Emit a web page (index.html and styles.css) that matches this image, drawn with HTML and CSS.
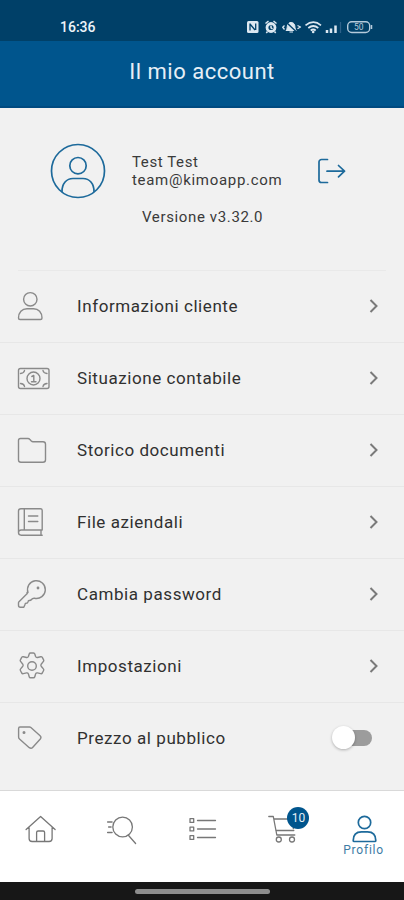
FILE: index.html
```html
<!DOCTYPE html>
<html lang="it">
<head>
<meta charset="utf-8">
<meta name="viewport" content="width=device-width, initial-scale=1">
<title>Il mio account</title>
<link rel="stylesheet" href="styles.css">
</head>
<body>
<div class="screen">
  <div class="status">
    <span class="clock">16:36</span>
    <svg class="status-icons" width="130" height="18" viewBox="0 0 130 18">
      <rect x="1" y="3" width="11.5" height="12" rx="1.5" fill="#dce8f1"/>
      <path d="M4 12.500V6l5 6M9.700 5.500V12" fill="none" stroke="#00426c" stroke-width="1.300"/>
      <circle cx="25" cy="9.500" r="4" fill="none" stroke="#dce8f1" stroke-width="2.800"/>
      <path d="M19.500 5.500l3-2.500M30.500 5.500l-3-2.500M21.500 13.500l-1.200 1.500M28.500 13.500l1.200 1.500M25 7.500v2.300l1.500 1" fill="none" stroke="#dce8f1" stroke-width="1.500"/>
      <path d="M40 12.500c1.500-1.300 1-4 1.600-5.600 1.200-3.300 5.800-3.300 7 0 .6 1.600.1 4.300 1.600 5.600zM43.500 14h3.500" fill="#dce8f1" stroke="#dce8f1"/>
      <path d="M40 4l10 9.500" stroke="#00426c" stroke-width="1.400"/>
      <path d="M36.500 9.500l2-2M36.500 9l2 2.500M51.500 7.500l3 1.500-3 1.800" fill="none" stroke="#dce8f1" stroke-width="1.300"/>
      <path d="M59.500 7.300q8-6.200 15.500 0M62.300 10q5-4 10 0M64.700 12.500q2.500-2 5 0" fill="none" stroke="#dce8f1" stroke-width="1.700"/>
      <circle cx="67.200" cy="14" r="1.300" fill="#dce8f1"/>
      <path d="M81 15v-3M85 15v-4.500M89.500 15V7.500" stroke="#dce8f1" stroke-width="2.500"/>
      <path d="M94.500 15V4" stroke="#2d6189" stroke-width="1.300"/>
      <rect x="101.700" y="3.700" width="22" height="10.800" rx="4" fill="none" stroke="#b6cbdb" stroke-width="1.400"/>
      <path d="M125.500 7v4" stroke="#b6cbdb" stroke-width="1.500"/>
      <text class="battery" x="112.700" y="12.400" text-anchor="middle">50</text>
    </svg>
  </div>
  <header class="header"><h1>Il mio account</h1></header>

  <section class="profile">
    <div class="identity">
      <svg class="avatar" width="56" height="56" viewBox="0 0 56 56">
        <circle cx="28" cy="28" r="26.500"/><circle cx="28" cy="22.700" r="8.200"/>
        <path d="M12 48.500c0-8 4.500-13 11-13h10c6.500 0 11 5 11 13"/>
      </svg>
      <div class="who"><div>Test Test</div><div class="mail">team@kimoapp.com</div></div>
      <svg class="logout" width="30" height="28" viewBox="0 0 30 28">
        <path d="M11.500 2.500H5.500a2.500 2.500 0 0 0-2.500 2.500v18a2.500 2.500 0 0 0 2.500 2.500h6M11 14.200h17.500M22.500 8.500l6 5.700-6 5.700"/>
      </svg>
    </div>
    <div class="version">Versione v3.32.0</div>
  </section>

  <main class="menu">
    <a class="row">
      <svg class="icon" viewBox="0 0 34 35"><circle cx="14.300" cy="10.300" r="6.700"/><path d="M2.500 29c0-5.500 3.500-9.300 8.500-9.300h6.500c5 0 8.500 3.800 8.500 9.300q0 1.500-1.500 1.500h-20.500q-1.500 0-1.500-1.500z"/></svg>
      <span class="label">Informazioni cliente</span>
      <svg class="chevron" viewBox="0 0 12 16"><path d="M2.500 2l6 6-6 6"/></svg>
    </a>
    <a class="row">
      <svg class="icon" viewBox="0 0 34 35"><rect x="2.500" y="7.500" width="30.500" height="20" rx="2"/><circle cx="17.500" cy="17.500" r="6.500"/><path d="M15.800 15.500l2-1v6.300M15.500 20.800h4.500M4.500 12.500q3.500-.2 4-3M31 12.500q-3.500-.2-4-3M4.500 22.500q3.500.2 4 3M31 22.500q-3.500.2-4 3"/></svg>
      <span class="label">Situazione contabile</span>
      <svg class="chevron" viewBox="0 0 12 16"><path d="M2.500 2l6 6-6 6"/></svg>
    </a>
    <a class="row">
      <svg class="icon" viewBox="0 0 34 35"><path d="M4.500 5.500h7.500q1 0 1.700.8l1.600 1.700q.7.700 1.700.7h10q2.500 0 2.500 2.500v15.500q0 2.500-2.500 2.500H5q-2.500 0-2.500-2.500V7.500q0-2 2-2z"/></svg>
      <span class="label">Storico documenti</span>
      <svg class="chevron" viewBox="0 0 12 16"><path d="M2.500 2l6 6-6 6"/></svg>
    </a>
    <a class="row">
      <svg class="icon" viewBox="0 0 34 35"><path d="M26.200 25H5.200q-2.700 0-2.700 2.600t2.700 2.600h21M2.500 27.500V6q0-2.300 2.300-2.300h19.700q1.700 0 1.700 1.700V25M8.300 3.700V25M25 25.300v4.700M12.500 11h9.300M12.500 16.500h9.300"/></svg>
      <span class="label">File aziendali</span>
      <svg class="chevron" viewBox="0 0 12 16"><path d="M2.500 2l6 6-6 6"/></svg>
    </a>
    <a class="row">
      <svg class="icon" viewBox="0 0 34 35"><path d="M12 15.500A8.900 8.900 0 1 1 18.500 21.300q-2-.2-3 1.200-.8 1.200-2.500 1-.8 0-1 1.500-.2 1.300-2 1.300-.8 0-1.200 1.700l-1 2.200h-3.500q-1.800 0-1.800-2v-2.200q0-.7.500-1.200l7.500-7.500q1.300-1.200.5-1.800"/><circle cx="22" cy="11" r=".7"/></svg>
      <span class="label">Cambia password</span>
      <svg class="chevron" viewBox="0 0 12 16"><path d="M2.500 2l6 6-6 6"/></svg>
    </a>
    <a class="row">
      <svg class="icon" viewBox="0 0 34 35"><circle cx="16" cy="17" r="4.300"/><path d="M14.500 4h3q1 0 1.300 1l.8 2.500q.5 1.200 1.800 1l3.300-.8q1-.2 1.600.7l1.300 2.400q.5.900-.2 1.600l-2.200 2.800q-.7 1 0 2l2.200 2.700q.7.800.2 1.600l-1.300 2.500q-.6.900-1.600.6l-3.300-.7q-1.300-.2-1.800 1l-.8 2.800q-.3 1-1.300 1h-3q-1 0-1.300-1l-.8-2.800q-.5-1.200-1.800-1l-3.300.7q-1 .3-1.600-.6l-1.300-2.500q-.5-.8.200-1.600l2.200-2.700q.7-1 0-2l-2.200-2.800q-.7-.7-.2-1.600l1.300-2.400q.6-.9 1.600-.7l3.300.8q1.300.2 1.800-1l.8-2.500q.3-1 1.300-1z"/></svg>
      <span class="label">Impostazioni</span>
      <svg class="chevron" viewBox="0 0 12 16"><path d="M2.500 2l6 6-6 6"/></svg>
    </a>
    <div class="row last">
      <svg class="icon" viewBox="0 0 34 35"><path d="M4 6h9.500q.8 0 1.400.5l9.200 8.200q1.600 1.500.2 3.300l-7.700 8.500q-1.400 1.500-3.300.2L3.500 18q-.9-.8-.9-2V7.400q0-1.400 1.400-1.400z"/><circle cx="8" cy="11.500" r=".8"/></svg>
      <span class="label">Prezzo al pubblico</span>
      <span class="switch"></span>
    </div>
  </main>

  <nav class="tabs">
    <a class="tab"><svg width="34" height="34" viewBox="-.6 0 34 34"><path d="M2.500 17.500L17 4.500l14.500 13M5.500 15.500v11q0 3 3 3h17q3 0 3-3v-11M13 29.500v-9q0-1.500 1.500-1.500h5q1.500 0 1.500 1.500v9"/></svg></a>
    <a class="tab"><svg width="34" height="34" viewBox="-.6 0 34 34"><circle cx="18" cy="15" r="9.800"/><path d="M24 23.500l7 8M3 10h4.500M4 15h2.500M3 20.500h4.500"/></svg></a>
    <a class="tab"><svg width="34" height="34" viewBox="0 0 34 34"><path d="M12.500 8.500h18M12.500 17h18M12.500 25.500h18M5 6.700h3.700v3.700H5zM5 15.200h3.700v3.700H5zM5 23.700h3.700v3.700H5z"/></svg></a>
    <a class="tab"><svg width="34" height="34" viewBox="-.8 0 34 34"><path d="M2 4.500h4.500l3.500 18.500h18M7 7h21l-1.500 9.500M9 18.500h18"/><circle cx="12" cy="27.500" r="2.500"/><circle cx="25.200" cy="27.500" r="2.500"/></svg><span class="badge">10</span></a>
    <a class="tab active"><svg width="34" height="34" viewBox="-.5 0 34 34"><circle cx="17" cy="10.500" r="6.200"/><path d="M5.700 28.500c0-5.500 3.200-8.700 8.300-8.700h6c5.100 0 8.300 3.200 8.300 8.700q0 1-1 1H6.700q-1 0-1-1z"/></svg><span class="tab-label">Profilo</span></a>
  </nav>
  <div class="gesture"><span></span></div>
</div>
</body>
</html>
```
FILE: styles.css
```css
* { box-sizing: border-box; }
body { margin: 0; background: #f1f1f1; font-family: Roboto, "Liberation Sans", sans-serif; color: #3a3a3a; }
.screen { width: 404px; height: 900px; display: flex; flex-direction: column; overflow: hidden; }
svg { display: block; flex: none; fill: none; stroke-linecap: round; stroke-linejoin: round; }

.status { height: 41px; flex: none; background: #004068; display: flex; justify-content: space-between; align-items: center; padding: 12px 28px 0 60px; color: #edf4f9; }
.clock { font-size: 14px; font-weight: 500; letter-spacing: 0; }
.status-icons { stroke-linecap: butt; }
.battery { font-size: 8.5px; fill: #b6cbdb; }

.header { height: 67px; flex: none; background: #00558d; border-bottom: 2px solid #004a80; text-align: center; }
.header h1 { margin: 0; padding-top: 17px; font-size: 22px; line-height: 28px; font-weight: 400; letter-spacing: 0.5px; color: #e6eff6; }

.profile { height: 162px; flex: none; padding-top: 35px; }
.identity { display: flex; align-items: center; height: 56px; padding-left: 50px; }
.avatar, .logout { stroke: #1d6a9b; stroke-width: 1.7; }
.who { width: 184px; margin-left: 26px; font-size: 15px; line-height: 18px; letter-spacing: 0.6px; white-space: nowrap; }
.mail { letter-spacing: 0.7px; }
.version { margin: 8px 0 0 142px; font-size: 15px; line-height: 20px; letter-spacing: 0.63px; }

.menu { flex: 1; }
.menu::before { content: ""; display: block; height: 1px; margin: 0 18px; background: #e9e9e9; }
.row { display: flex; align-items: center; height: 72px; padding: 0 24px 0 16px; border-bottom: 1px solid #e7e7e7; }
.row.last { border: 0; height: 71px; }
.icon { width: 34px; height: 35px; stroke: #8a8a8a; stroke-width: 1.4; }
.label { flex: 1; margin-left: 27px; padding-bottom: 2px; font-size: 17px; letter-spacing: 0.57px; color: #303030; }
.chevron { width: 12px; height: 16px; margin-bottom: 1px; stroke: #7a7a7a; stroke-width: 2; stroke-linecap: butt; stroke-linejoin: miter; }
.switch { width: 36px; height: 16px; margin: 0 8px 2px 0; border-radius: 8px; background: #9c9c9c; display: flex; align-items: center; }
.switch::before { content: ""; flex: none; width: 23px; height: 23px; margin-left: -4px; border-radius: 50%; background: #fff; box-shadow: 0 1px 3px rgba(0, 0, 0, 0.28); }

.tabs { height: 92px; flex: none; display: flex; background: #fff; border-top: 1px solid #d9d9d9; }
.tab { flex: 1; position: relative; display: flex; flex-direction: column; align-items: center; padding-top: 21px; }
.tab svg { stroke: #777; stroke-width: 1.3; }
.tab.active svg { stroke: #1d6a9b; stroke-width: 1.7; }
.tab-label { margin-top: -4px; font-size: 12px; line-height: 16px; letter-spacing: 0.8px; color: #3d7ca5; }
.badge { position: absolute; left: 45px; top: 16px; width: 22px; height: 22px; border-radius: 50%; background: #00558d; color: #e6eff6; font-size: 12px; line-height: 22px; text-align: center; }

.gesture { height: 18px; flex: none; background: #171717; display: flex; justify-content: center; align-items: center; }
.gesture span { width: 135px; height: 5px; border-radius: 3px; background: #8d8d8d; }
```
